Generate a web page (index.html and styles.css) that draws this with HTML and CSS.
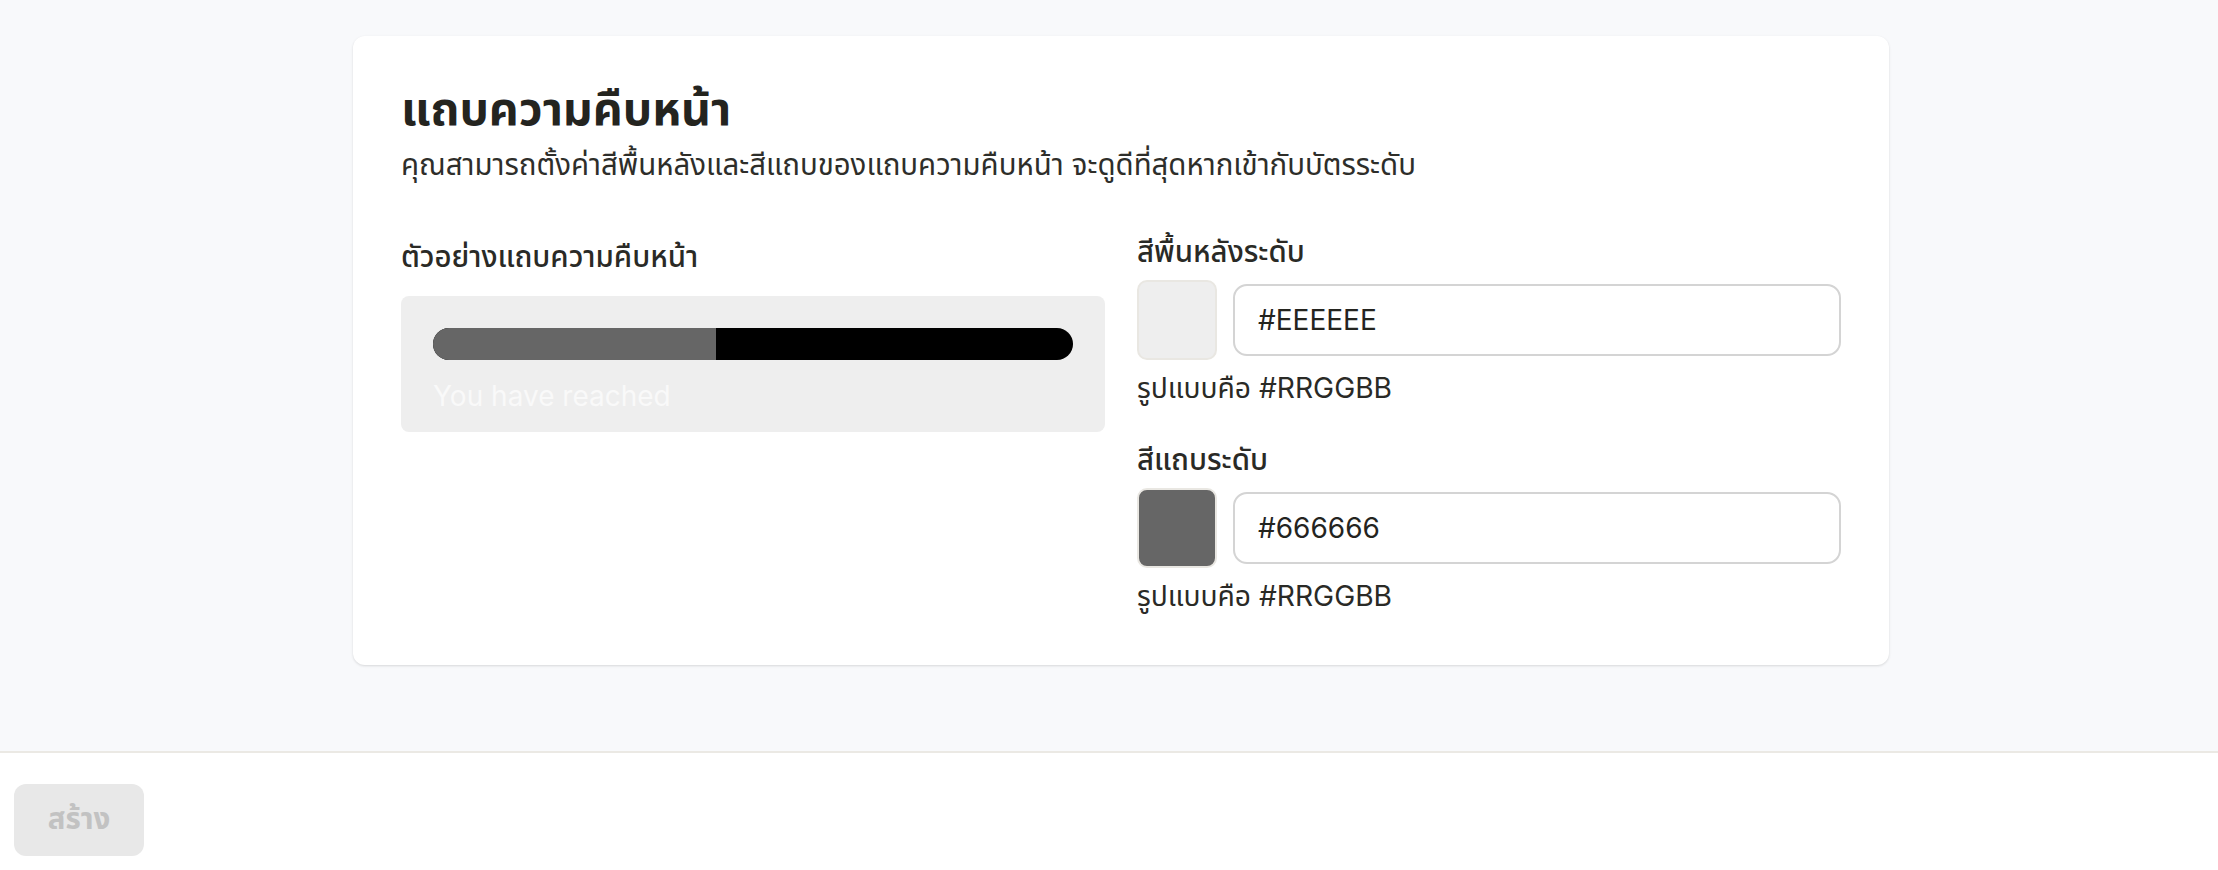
FILE: index.html
```html
<!DOCTYPE html>
<html lang="th">
<head>
<meta charset="utf-8">
<title>แถบความคืบหน้า</title>
<link rel="stylesheet" href="styles.css">
</head>
<body>
<main class="page">
  <section class="card">
    <h1 class="title">แถบความคืบหน้า</h1>
    <p class="subtitle">คุณสามารถตั้งค่าสีพื้นหลังและสีแถบของแถบความคืบหน้า จะดูดีที่สุดหากเข้ากับบัตรระดับ</p>
    <div class="grid">
      <div class="col col-preview">
        <div class="label label-preview">ตัวอย่างแถบความคืบหน้า</div>
        <div class="preview">
          <div class="bar"><div class="bar-fill" style="width:44.2%"></div></div>
          <div class="preview-text">You have reached</div>
        </div>
      </div>
      <div class="col col-fields">
        <div class="field">
          <div class="label">สีพื้นหลังระดับ</div>
          <div class="row">
            <div class="swatch swatch-bg"></div>
            <input class="input" type="text" value="#EEEEEE">
          </div>
          <div class="help">รูปแบบคือ #RRGGBB</div>
        </div>
        <div class="field">
          <div class="label">สีแถบระดับ</div>
          <div class="row">
            <div class="swatch swatch-bar"></div>
            <input class="input" type="text" value="#666666">
          </div>
          <div class="help">รูปแบบคือ #RRGGBB</div>
        </div>
      </div>
    </div>
  </section>
</main>
<footer class="footer">
  <button class="btn" type="button" disabled>สร้าง</button>
</footer>
</body>
</html>
```
FILE: styles.css
```css
* { box-sizing: border-box; }
html, body { margin: 0; padding: 0; }
body {
  font-family: Inter, "Noto Sans Thai", sans-serif;
  color: #24241f;
  background: #ffffff;
  width: 2218px;
  height: 870px;
  overflow: hidden;
}
.page {
  background: #f8f9fb;
  height: 751px;
  padding: 36px 0 0 353px;
}
.card {
  width: 1536px;
  background: #ffffff;
  border-radius: 12px;
  box-shadow: 0 1px 3px rgba(0,0,0,0.10), 0 1px 2px rgba(0,0,0,0.04);
  padding: 48px 48px 51px;
}
.title {
  margin: 0;
  font-size: 46.4px;
  line-height: 48px;
  font-weight: 700;
  color: #24241f;
}
.subtitle {
  margin: 15px 0 0 0;
  font-size: 29.4px;
  line-height: 36px;
  color: #2e2e2a;
}
.grid {
  margin-top: 51px;
  display: grid;
  grid-template-columns: 704px 704px;
  column-gap: 32px;
}
.col-fields {
  display: flex;
  flex-direction: column;
  gap: 36px;
}
.label {
  font-size: 29.4px;
  line-height: 36px;
  font-weight: 500;
  color: #2a2a26;
}
.label-preview {
  margin-top: 5px;
}
.preview {
  margin-top: 21px;
  background: #eeeeee;
  border-radius: 8px;
  padding: 32px 32px 16px;
}
.bar {
  height: 32px;
  border-radius: 16px;
  background: #000000;
  overflow: hidden;
}
.bar-fill {
  height: 100%;
  background: #666666;
}
.preview-text {
  margin-top: 16px;
  font-size: 28px;
  line-height: 40px;
  color: #f9f9f9;
}
.row {
  margin-top: 10px;
  display: flex;
  align-items: center;
  gap: 16px;
  height: 80px;
}
.swatch {
  width: 80px;
  height: 80px;
  border-radius: 10px;
  border: 2px solid #e9e7e2;
  flex: none;
}
.swatch-bg { background: #eeeeee; }
.swatch-bar { background: #666666; }
.input {
  flex: 1;
  height: 72px;
  border: 2px solid #d4d4d4;
  border-radius: 14px;
  padding: 0 23px;
  font-family: Inter, "Noto Sans Thai", sans-serif;
  font-size: 28px;
  color: #24241f;
  background: #ffffff;
  outline: none;
}
.help {
  margin-top: 10px;
  font-size: 28.2px;
  line-height: 36px;
  color: #2a2a26;
}
.footer {
  border-top: 2px solid #ebe9e4;
  height: 119px;
  padding: 31px 0 0 14px;
  background: #ffffff;
}
.btn {
  width: 130px;
  height: 72px;
  border: none;
  border-radius: 12px;
  background: #e8e8e8;
  color: #c2c2c2;
  font-family: Inter, "Noto Sans Thai", sans-serif;
  font-size: 29.4px;
  font-weight: 700;
  padding: 0;
}
```
